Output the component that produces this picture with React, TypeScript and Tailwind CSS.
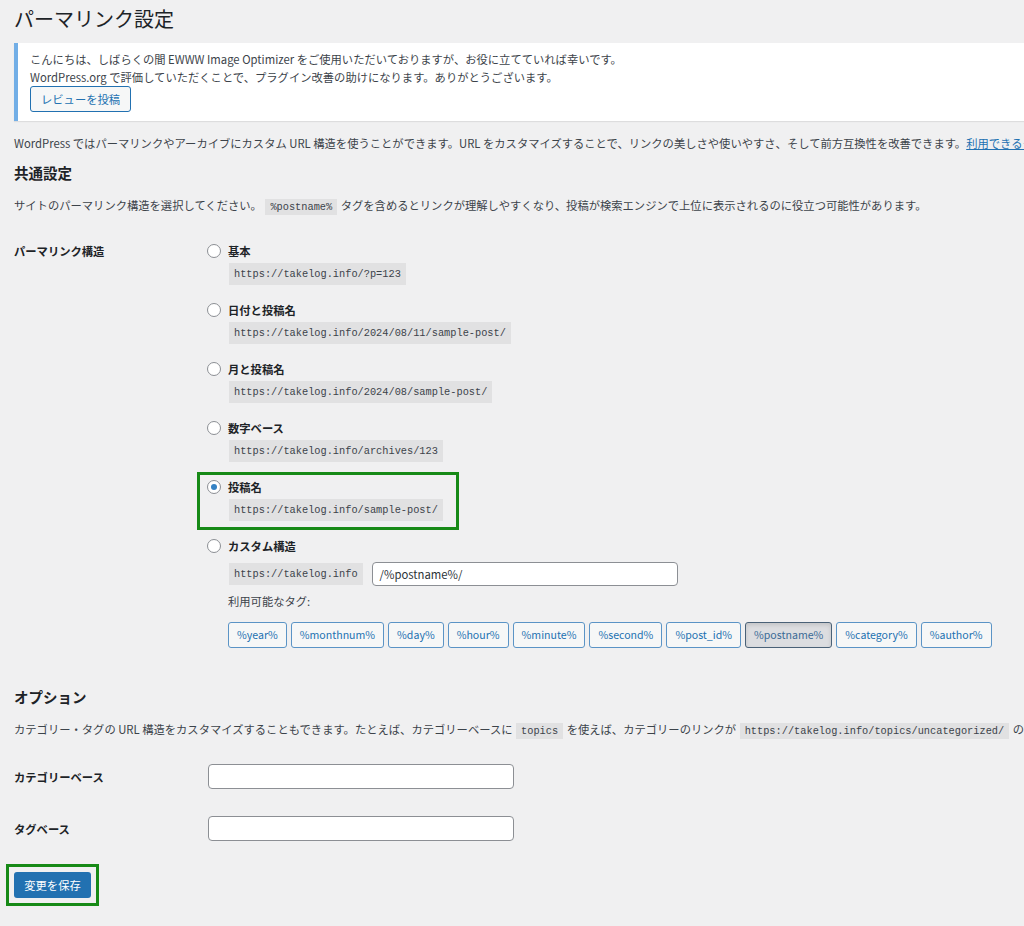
const jp = "font-['Noto_Sans_CJK_JP',sans-serif]";

const Code = ({ children }: { children: React.ReactNode }) => (
  <code className="font-['Liberation_Mono',monospace] text-[10.3px] bg-[#e1e1e2] px-[5px] py-[2px] mx-[1px] text-[#3c434a]">
    {children}
  </code>
);

const Radio = ({ checked = false }: { checked?: boolean }) => (
  <span className="w-[14px] h-[14px] rounded-full border border-[#8c8f94] bg-white flex items-center justify-center shrink-0">
    {checked && <span className="w-[6px] h-[6px] rounded-full bg-[#3582c4]" />}
  </span>
);

const options = [
  { label: "基本", url: "https://takelog.info/?p=123" },
  { label: "日付と投稿名", url: "https://takelog.info/2024/08/11/sample-post/" },
  { label: "月と投稿名", url: "https://takelog.info/2024/08/sample-post/" },
  { label: "数字ベース", url: "https://takelog.info/archives/123" },
  { label: "投稿名", url: "https://takelog.info/sample-post/", checked: true },
];

const tags = [
  "%year%",
  "%monthnum%",
  "%day%",
  "%hour%",
  "%minute%",
  "%second%",
  "%post_id%",
  "%postname%",
  "%category%",
  "%author%",
];

const Option = ({ label, url, checked }: { label: string; url: string; checked?: boolean }) => (
  <div className="relative mb-[18px]">
    {checked && (
      <div className="absolute left-[-10px] top-[-6px] w-[262px] h-[58px] border-[3px] border-[#178a17] pointer-events-none" />
    )}
    <div className="flex items-center gap-[7px] h-[18px]">
      <Radio checked={checked} />
      <span className="font-bold text-[#1d2327]">{label}</span>
    </div>
    <div className="mt-[5px] ml-[21px] h-[18px] flex items-center">
      <Code>{url}</Code>
    </div>
  </div>
);

export default function App() {
  return (
    <div className={`min-h-[926px] w-full overflow-hidden bg-[#f0f0f1] ${jp} text-[11.3px] leading-[18px] text-[#3c434a]`}>
      <div className="pl-[14px] pt-[5px] whitespace-nowrap">
        <h1 className="text-[20px] leading-[28px] text-[#1d2327] font-normal">パーマリンク設定</h1>

        <div className="mt-[10px] mr-[-40px] bg-white border-l-4 border-[#72aee6] shadow-[0_1px_1px_rgba(0,0,0,0.08)] pl-[12px] pt-[7px] pb-[9px]">
          <p>こんにちは、しばらくの間 EWWW Image Optimizer をご使用いただいておりますが、お役に立てていれば幸いです。</p>
          <p>WordPress.org で評価していただくことで、プラグイン改善の助けになります。ありがとうございます。</p>
          <button className="h-[26px] px-[10px] border border-[#2271b1] rounded-[3px] bg-[#f6f7f7] text-[#2271b1]">
            レビューを投稿
          </button>
        </div>

        <p className="mt-[13px]">
          WordPress ではパーマリンクやアーカイブにカスタム URL 構造を使うことができます。URL をカスタマイズすることで、リンクの美しさや使いやすさ、そして前方互換性を改善できます。
          <a className="text-[#2271b1] underline">利用できるタグについての説明</a>
        </p>

        <h2 className="mt-[11px] text-[14.5px] leading-[20px] font-bold text-[#1d2327]">共通設定</h2>
        <p className="mt-[13px]">
          サイトのパーマリンク構造を選択してください。 <Code>%postname%</Code> タグを含めるとリンクが理解しやすくなり、投稿が検索エンジンで上位に表示されるのに役立つ可能性があります。
        </p>

        <div className="mt-[26px] grid grid-cols-[193px_1fr]">
          <div className="font-bold text-[#1d2327]">パーマリンク構造</div>
          <div>
            {options.map((o) => (
              <Option key={o.label} {...o} />
            ))}
            <div className="flex items-center gap-[7px] h-[18px]">
              <Radio />
              <span className="font-bold text-[#1d2327]">カスタム構造</span>
            </div>
            <div className="mt-[7px] ml-[21px] flex items-center gap-[8px]">
              <Code>https://takelog.info</Code>
              <div className="w-[306px] h-[24px] bg-white border border-[#8c8f94] rounded-[4px] px-[7px] flex items-center text-[#2c3338]">
                /%postname%/
              </div>
            </div>
            <div className="mt-[6px] ml-[21px]">利用可能なタグ:</div>
            <div className="mt-[12px] ml-[21px] flex gap-[4px] text-[10.6px]">
              {tags.map((t) =>
                t === "%postname%" ? (
                  <button
                    key={t}
                    className="h-[26px] px-[8px] rounded-[3px] border border-[#4a6177] bg-[#dcdde0] text-[#3a6a96] shadow-[inset_0_2px_4px_rgba(0,0,0,0.12)]"
                  >
                    {t}
                  </button>
                ) : (
                  <button
                    key={t}
                    className="h-[26px] px-[8px] rounded-[3px] border border-[#5b94c6] bg-[#f6f7f7] text-[#2271b1]"
                  >
                    {t}
                  </button>
                )
              )}
            </div>
          </div>
        </div>

        <h2 className="mt-[39px] text-[14.5px] leading-[20px] font-bold text-[#1d2327]">オプション</h2>
        <p className="mt-[13px]">
          カテゴリー・タグの URL 構造をカスタマイズすることもできます。たとえば、カテゴリーベースに <Code>topics</Code> を使えば、カテゴリーのリンクが <Code>https://takelog.info/topics/uncategorized/</Code> のようになります。
        </p>

        <div className="mt-[24px] grid grid-cols-[194px_1fr] items-center">
          <div className="font-bold text-[#1d2327]">カテゴリーベース</div>
          <div className="w-[306px] h-[25px] bg-white border border-[#8c8f94] rounded-[4px]" />
        </div>
        <div className="mt-[27px] grid grid-cols-[194px_1fr] items-center">
          <div className="font-bold text-[#1d2327]">タグベース</div>
          <div className="w-[306px] h-[25px] bg-white border border-[#8c8f94] rounded-[4px]" />
        </div>

        <div className="mt-[23px] ml-[-8px] w-fit border-[3px] border-[#178a17] p-[5px]">
          <button className="h-[26px] w-[77px] rounded-[3px] bg-[#2271b1] text-white text-[11.3px]">
            変更を保存
          </button>
        </div>
      </div>
    </div>
  );
}
